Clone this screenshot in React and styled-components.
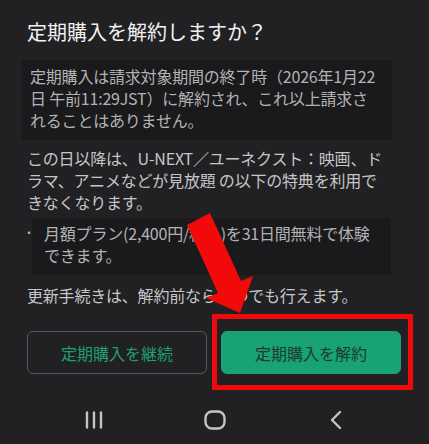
import React from 'react';
import styled, { createGlobalStyle } from 'styled-components';

const GlobalStyle = createGlobalStyle`
  html, body {
    margin: 0;
    padding: 0;
    background: #212124;
  }
  body {
    font-family: "Noto Sans CJK JP", "Noto Sans", sans-serif;
  }
`;

export default function App() {
  return (
    <StyledScreen>
      <GlobalStyle />
      <StyledDialog>
        <StyledTitle>定期購入を解約しますか？</StyledTitle>
        <StyledNote>
          定期購入は請求対象期間の終了時（2026年1月22
          <br />
          日 午前11:29JST）に解約され、これ以上請求さ
          <br />
          れることはありません。
        </StyledNote>
        <StyledParagraph $top={7}>
          この日以降は、U-NEXT／ユーネクスト：映画、ド
          <br />
          ラマ、アニメなどが見放題 の以下の特典を利用で
          <br />
          きなくなります。
        </StyledParagraph>
        <StyledList>
          <StyledBullet>・</StyledBullet>
          <StyledListNote>
            月額プラン(2,400円/税込)を31日間無料で体験
            <br />
            できます。
          </StyledListNote>
        </StyledList>
        <StyledParagraph $top={9}>更新手続きは、解約前ならいつでも行えます。</StyledParagraph>
        <StyledActions>
          <StyledButton>定期購入を継続</StyledButton>
          <StyledButton $primary>定期購入を解約</StyledButton>
        </StyledActions>
      </StyledDialog>

      <StyledNavBar>
        <StyledNavItem>
          <svg width="20" height="18" viewBox="0 0 20 18">
            <g stroke="#c4c4c6" strokeWidth="2.4" strokeLinecap="round">
              <line x1="3" y1="1.5" x2="3" y2="16.5" />
              <line x1="10" y1="1.5" x2="10" y2="16.5" />
              <line x1="17" y1="1.5" x2="17" y2="16.5" />
            </g>
          </svg>
        </StyledNavItem>
        <StyledNavItem>
          <svg width="22" height="20" viewBox="0 0 22 20">
            <rect x="1.5" y="1.5" width="19" height="17" rx="6.5" fill="none" stroke="#c4c4c6" strokeWidth="2.4" />
          </svg>
        </StyledNavItem>
        <StyledNavItem>
          <svg width="12" height="20" viewBox="0 0 12 20">
            <polyline points="10,2 2,10 10,18" fill="none" stroke="#c4c4c6" strokeWidth="2.4" strokeLinecap="round" strokeLinejoin="round" />
          </svg>
        </StyledNavItem>
      </StyledNavBar>

      {/* annotation overlays */}
      <StyledHighlight />
      <StyledArrow width="429" height="444" viewBox="0 0 429 444">
        <polygon points="187,225 210,213 241,281 253,276 240,313 206,298 218,293" fill="#f20a0a" />
      </StyledArrow>
    </StyledScreen>
  );
}

// Styled Components
const StyledScreen = styled.div`
  position: relative;
  width: 429px;
  height: 444px;
  overflow: hidden;
  background: #212124;
  display: flex;
  flex-direction: column;
`;

const StyledDialog = styled.div`
  display: flex;
  flex-direction: column;
  padding: 20px 28px 0 27px;
  font-size: 16px;
`;

const StyledTitle = styled.h1`
  margin: 0;
  font-size: 20px;
  line-height: 24px;
  font-weight: 400;
  color: #f2f2f2;
  white-space: nowrap;
`;

const StyledNote = styled.div`
  margin: 16px 0 0 -5px;
  width: 370px;
  box-sizing: border-box;
  padding: 5px 8px 9px;
  background: #1a1a1c;
  color: #b3b3b5;
  line-height: 22px;
  white-space: nowrap;
  letter-spacing: -0.2px;
`;

const StyledParagraph = styled.p`
  margin: ${props => props.$top}px 0 0;
  color: #c6c6c8;
  line-height: 22px;
  white-space: nowrap;
  letter-spacing: -0.2px;
`;

const StyledList = styled.div`
  display: flex;
  align-items: flex-start;
  margin-top: 5px;
`;

const StyledBullet = styled.span`
  width: 6px;
  margin: 4px 0 0 -1px;
  color: #b3b3b5;
  font-size: 12px;
  line-height: 22px;
  overflow: visible;
  text-indent: -3px;
`;

const StyledListNote = styled.div`
  margin-left: 0;
  width: 359px;
  box-sizing: border-box;
  padding: 4px 8px 9px 12px;
  background: #1a1a1c;
  color: #b3b3b5;
  line-height: 22px;
  white-space: nowrap;
  letter-spacing: -0.2px;
`;

const StyledActions = styled.div`
  display: grid;
  grid-template-columns: 180px 180px;
  column-gap: 14px;
  margin-top: 25px;
`;

const StyledButton = styled.button`
  height: 43px;
  box-sizing: border-box;
  border-radius: 6px;
  font-family: inherit;
  font-size: 16px;
  border: 1.5px solid ${props => (props.$primary ? '#19a274' : '#58585c')};
  background: ${props => (props.$primary ? '#19a274' : 'transparent')};
  color: ${props => (props.$primary ? '#1d3b30' : '#1f9e72')};
  cursor: pointer;
`;

const StyledNavBar = styled.nav`
  display: grid;
  grid-template-columns: repeat(3, 121px);
  justify-content: center;
  align-items: center;
  height: 49px;
  margin-top: 21px;
`;

const StyledNavItem = styled.div`
  display: flex;
  justify-content: center;
  align-items: center;
  padding-left: ${props => props.$shift || 0}px;
`;

const StyledHighlight = styled.div`
  position: absolute;
  left: 212px;
  top: 314px;
  width: 201px;
  height: 76px;
  box-sizing: border-box;
  border: 5px solid #ee0a0a;
  pointer-events: none;
`;

const StyledArrow = styled.svg`
  position: absolute;
  left: 0;
  top: 0;
  pointer-events: none;
`;
